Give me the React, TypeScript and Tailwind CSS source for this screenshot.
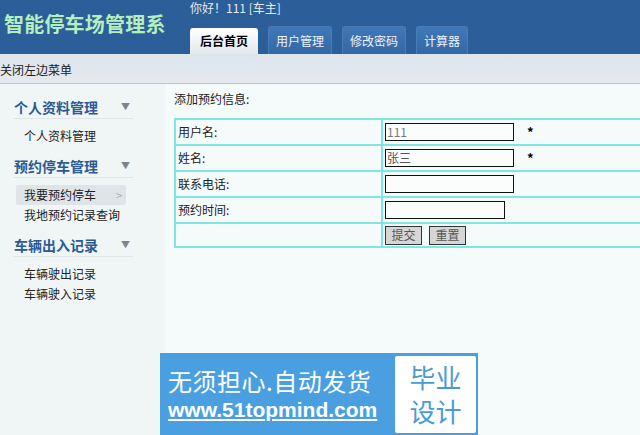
import React from 'react';

/* 预约停车 — 后台页面 (header + 左侧菜单 + 表单) */

const tabs = [
    { label: '后台首页', active: true, w: 'w-[68px]' },
    { label: '用户管理', active: false, w: 'w-[64px]' },
    { label: '修改密码', active: false, w: 'w-[64px]' },
    { label: '计算器', active: false, w: 'w-[52px]' },
];

const menu = [
    { title: '个人资料管理', items: ['个人资料管理'] },
    { title: '预约停车管理', items: ['我要预约停车', '我地预约记录查询'] },
    { title: '车辆出入记录', items: ['车辆驶出记录', '车辆驶入记录'] },
];

const rows = [
    { label: '用户名:', value: '111', required: true, width: 'w-[129px]', color: 'text-[#777]' },
    { label: '姓名:', value: '张三', required: true, width: 'w-[129px]', color: 'text-[#555]' },
    { label: '联系电话:', value: '', required: false, width: 'w-[129px]', color: '' },
    { label: '预约时间:', value: '', required: false, width: 'w-[120px]', color: '' },
];

function Header() {
    return (
        <div className="h-[54px] bg-[#2c5e99] flex">
            <div className="w-[190px] pl-1 pt-[11px] text-[20px] font-bold text-[#b4efbd] leading-[26px] tracking-[0.2px] whitespace-nowrap">
                智能停车场管理系
            </div>
            <div className="flex flex-col">
                <div className="h-[23px] text-[12px] text-[#e4ebf3] leading-[16px]">你好！111 [车主]</div>
                <div className="flex items-end gap-[10px] h-[31px]">
                    {tabs.map(t =>
                        t.active ? (
                            <div
                                key={t.label}
                                className={`${t.w} h-[26px] rounded-t-[3px] bg-gradient-to-b from-white to-[#e3e8ee] text-[12px] font-bold text-black flex items-center justify-center`}
                            >
                                {t.label}
                            </div>
                        ) : (
                            <div
                                key={t.label}
                                className={`${t.w} h-[28px] rounded-t-[3px] border border-b-0 border-[#4a7cb6] bg-gradient-to-b from-[#4078b8] to-[#3368a6] text-[12px] text-[#eef3fa] flex items-center justify-center`}
                            >
                                {t.label}
                            </div>
                        ),
                    )}
                </div>
            </div>
        </div>
    );
}

function Sidebar() {
    return (
        <div className="w-[165px] shrink-0 bg-[#f0f6f6] pt-[12px] pl-[13px] pr-[32px]">
            {menu.map((sec, i) => (
                <div key={sec.title} className={i === 0 ? '' : 'mt-[9px]'}>
                    <div className="h-[23px] flex items-center justify-between border-b border-[#dfe6e8] pl-[1px]">
                        <span className="text-[14px] font-bold text-[#2b5b92] leading-[16px]">{sec.title}</span>
                        <span className="text-[9px] text-[#7d8690] pr-[3px]">▼</span>
                    </div>
                    <div className="pt-[7px] flex flex-col">
                        {sec.items.map(it =>
                            it === '我要预约停车' ? (
                                <div
                                    key={it}
                                    className="h-[20px] ml-[3px] w-[110px] rounded-[2px] bg-[#dfe4e8] flex items-center justify-between pl-[8px] pr-[4px] text-[12px] text-[#222]"
                                >
                                    <span>{it}</span>
                                    <span className="text-[#a5adb5] text-[11px]">&gt;</span>
                                </div>
                            ) : (
                                <div key={it} className="h-[20px] pl-[11px] flex items-center text-[12px] text-[#222] whitespace-nowrap">
                                    {it}
                                </div>
                            ),
                        )}
                    </div>
                </div>
            ))}
        </div>
    );
}

function Input({ value, width, color }: { value: string; width: string; color: string }) {
    return (
        <div className={`${width} h-[18px] border border-[#111] bg-[#fbfdfd] text-[12px] leading-[16px] pl-[1px] ${color}`}>
            {value}
        </div>
    );
}

function ReserveForm() {
    return (
        <div className="flex-1 bg-[#f5fafa] pl-[9px] pt-[8px] overflow-hidden">
            <div className="text-[12px] text-[#222] h-[26px] leading-[14px]">添加预约信息:</div>
            <table className="border-collapse w-[480px] border-2 border-[#7fe6e6]">
                <tbody>
                    {rows.map(r => (
                        <tr key={r.label} className="h-[26px]">
                            <td className="w-[207px] border-2 border-[#7fe6e6] pl-[2px] text-[12px] text-[#222]">{r.label}</td>
                            <td className="border-2 border-[#7fe6e6] pl-[2px]">
                                <div className="flex items-center">
                                    <Input value={r.value} width={r.width} color={r.color} />
                                    {r.required && <span className="ml-[13px] text-[13px] font-bold text-black">*</span>}
                                </div>
                            </td>
                        </tr>
                    ))}
                    <tr className="h-[24px]">
                        <td className="border-2 border-[#7fe6e6]" />
                        <td className="border-2 border-[#7fe6e6] pl-[2px]">
                            <div className="flex gap-[7px]">
                                {['提交', '重置'].map(b => (
                                    <div
                                        key={b}
                                        className="w-[37px] h-[19px] border border-[#333] bg-[#d6d6d6] text-[12px] text-[#555] flex items-center justify-center"
                                    >
                                        {b}
                                    </div>
                                ))}
                            </div>
                        </td>
                    </tr>
                </tbody>
            </table>
        </div>
    );
}

function AdBanner() {
    return (
        <div className="absolute left-[160px] top-[353px] w-[318px] h-[82px] bg-[#4a9fe1] flex items-center pl-[8px] pr-[2px]">
            <div className="flex flex-col flex-1">
                <div className="text-[24px] text-white leading-[30px] tracking-[0.5px]">无须担心.自动发货</div>
                <div className="text-[21px] text-white font-bold leading-[24px] underline underline-offset-2 font-['Liberation_Sans',sans-serif] mt-[2px]">
                    www.51topmind.com
                </div>
            </div>
            <div className="w-[81px] h-[77px] bg-white rounded-[2px] flex flex-col items-center justify-center text-[26px] leading-[34px] text-[#4a9ad9]">
                <span>毕业</span>
                <span>设计</span>
            </div>
        </div>
    );
}

export default function App() {
    return (
        <div className="relative w-[640px] h-[435px] overflow-hidden bg-[#f5fafa] font-['Noto_Sans_CJK_SC',sans-serif]">
            <Header />
            <div className="h-[30px] bg-gradient-to-b from-[#dde5ed] to-[#e6e9ee] border-b border-[#b9c9d2] flex items-center pt-[3px] text-[12px] text-[#222]">
                关闭左边菜单
            </div>
            <div className="flex h-[351px]">
                <Sidebar />
                <ReserveForm />
            </div>
            <AdBanner />
        </div>
    );
}
